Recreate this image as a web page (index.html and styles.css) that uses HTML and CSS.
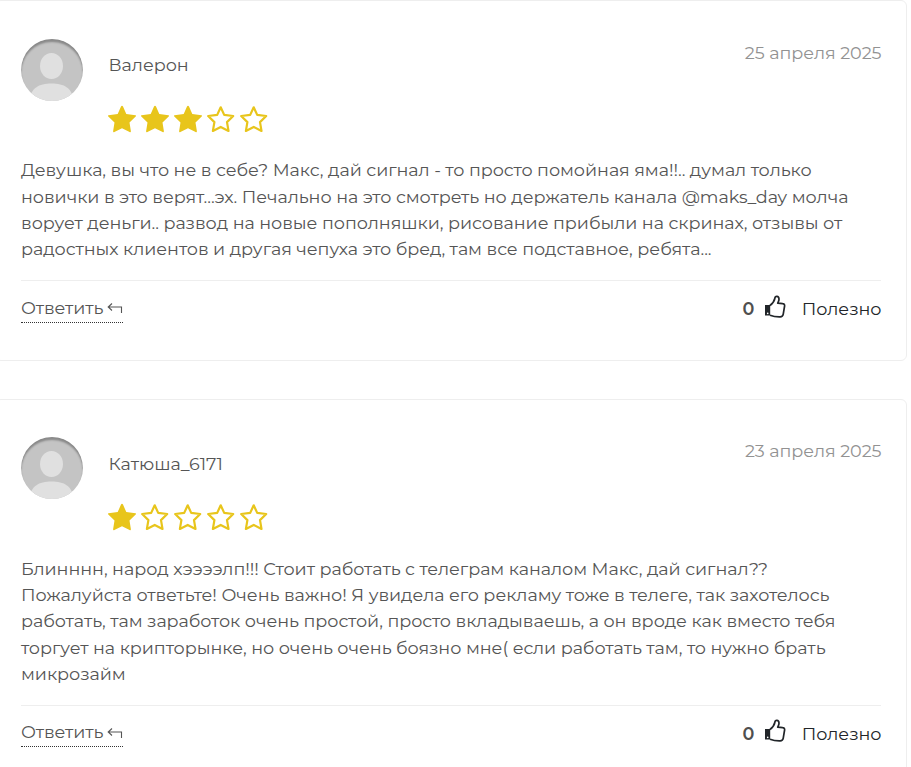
FILE: index.html
```html
<!DOCTYPE html>
<html lang="ru">
<head>
    <meta charset="UTF-8">
    <title>Отзывы</title>
    <link rel="stylesheet" href="styles.css">
</head>
<body>
    <svg class="sprite" xmlns="http://www.w3.org/2000/svg">
        <symbol id="star" viewBox="0 0 28 28">
            <path d="M14 .8Q14.600.800 15 1.600L18.300 9.100 27.500 10.200Q28.500 10.600 27.700 11.400L21.500 17.600 22.900 26.200Q22.900 27.600 21.600 27L14 23.300 6.400 27Q5.100 27.600 5.100 26.200L6.500 17.600.3 11.400Q-.5 10.600.5 10.200L9.700 9.100 13 1.600Q13.400.8 14 .8z"/>
        </symbol>
        <symbol id="star-empty" viewBox="0 0 28 28">
            <path d="M13.700 2.300L17.200 9.900 26.200 11 20 17.100 21.500 25.900 13.700 21.900 5.900 25.900 7.400 17.100 1.200 11 10.200 9.900z" fill="none" stroke="currentColor" stroke-width="2.200" stroke-linejoin="round"/>
        </symbol>
        <symbol id="avatar" viewBox="0 0 62 62">
            <rect width="62" height="62" fill="#c4c4c4"/>
            <ellipse cx="30.500" cy="27" rx="11.500" ry="13" fill="#e0e0e0"/>
            <path d="M9 62C9 49 18 44.500 30.500 44.500S52 49 52 62z" fill="#e0e0e0"/>
        </symbol>
        <symbol id="reply" viewBox="0 0 16 12">
            <path d="M5 1.500L1.200 5 5 8.500M1.200 5H14.500V11" fill="none" stroke="currentColor" stroke-width="1.100"/>
        </symbol>
        <symbol id="like" viewBox="0 0 22 23">
            <path d="M1 10h5.200v10.500H1z" fill="currentColor"/>
            <circle cx="3.700" cy="18.400" r=".8" fill="#fff"/>
            <path d="M6 10.500C8.500 8.500 10.300 6.500 10.800 3.500 11.200.600 14.800.8 15 4c.1 1.800-.8 3-1.300 4.200l5 .5c1.600.1 2.100 1 1.900 2.300l-1.400 8.400c-.3 1.600-1.400 2.400-3 2.400-4.300.1-7.100-.4-10.200-1.600" fill="none" stroke="currentColor" stroke-width="1.700" stroke-linejoin="round"/>
        </symbol>
    </svg>

    <div class="reviews">
        <div class="review">
            <div class="review-header">
                <div class="avatar"><svg><use href="#avatar"/></svg></div>
                <div class="author">
                    <div class="name">Валерон</div>
                    <div class="stars">
                        <svg><use href="#star"/></svg>
                        <svg><use href="#star"/></svg>
                        <svg><use href="#star"/></svg>
                        <svg><use href="#star-empty"/></svg>
                        <svg><use href="#star-empty"/></svg>
                    </div>
                </div>
                <div class="date">25 апреля 2025</div>
            </div>
            <div class="review-text">Девушка, вы что не в себе? Макс, дай сигнал - то просто помойная яма!!.. думал только новички в это верят...эх. Печально на это смотреть но держатель канала @maks_day молча ворует деньги.. развод на новые пополняшки, рисование прибыли на скринах, отзывы от радостных клиентов и другая чепуха это бред, там все подставное, ребята...</div>
            <div class="review-footer">
                <a class="reply">Ответить <svg><use href="#reply"/></svg></a>
                <div class="useful">
                    <b>0</b>
                    <svg><use href="#like"/></svg>
                    <span>Полезно</span>
                </div>
            </div>
        </div>

        <div class="review">
            <div class="review-header">
                <div class="avatar"><svg><use href="#avatar"/></svg></div>
                <div class="author">
                    <div class="name">Катюша_6171</div>
                    <div class="stars">
                        <svg><use href="#star"/></svg>
                        <svg><use href="#star-empty"/></svg>
                        <svg><use href="#star-empty"/></svg>
                        <svg><use href="#star-empty"/></svg>
                        <svg><use href="#star-empty"/></svg>
                    </div>
                </div>
                <div class="date">23 апреля 2025</div>
            </div>
            <div class="review-text">Блинннн, народ хээээлп!!! Стоит работать с телеграм каналом Макс, дай сигнал?? Пожалуйста ответьте! Очень важно! Я увидела его рекламу тоже в телеге, так захотелось работать, там заработок очень простой, просто вкладываешь, а он вроде как вместо тебя торгует на крипторынке, но очень очень боязно мне( если работать там, то нужно брать микрозайм</div>
            <div class="review-footer">
                <a class="reply">Ответить <svg><use href="#reply"/></svg></a>
                <div class="useful">
                    <b>0</b>
                    <svg><use href="#like"/></svg>
                    <span>Полезно</span>
                </div>
            </div>
        </div>
    </div>
</body>
</html>
```
FILE: styles.css
```css
html, body {
    height: 100%;
    overflow: hidden;
}
body {
    margin: 0;
    background-color: #fff;
    font-family: Montserrat, Inter, sans-serif;
    font-size: 17.6px;
    font-weight: 400;
    line-height: 26.4px;
    letter-spacing: -0.053px;
    color: #555;
}
.sprite {
    display: none;
}
.reviews {
    width: 912px;
    height: 100%;
    box-sizing: border-box;
    padding-top: 0.2px;
    margin-left: -5px;
    overflow: hidden;
}
.review {
    box-sizing: border-box;
    padding: 37.8px 25px 36.6px;
    margin-bottom: 38px;
    border: 1px solid #eee;
    border-radius: 6px;
}
.review-header {
    display: flex;
    height: 118.2px;
}
.avatar {
    position: relative;
    width: 62px;
    height: 62px;
    border-radius: 50%;
    overflow: hidden;
}
.avatar svg {
    display: block;
    width: 62px;
    height: 62px;
}
.avatar::after {
    content: "";
    position: absolute;
    inset: 0;
    border-radius: 50%;
    box-shadow: inset 0 3px 2px rgba(0,0,0,0.3);
}
.author {
    flex: 1;
    padding: 13.2px 0 0 25px;
}
.name {
    padding-left: 0.5px;
}
.stars {
    display: flex;
    gap: 5px;
    margin-top: 26.4px;
    color: #e8c51b;
}
.stars svg {
    width: 28px;
    height: 28px;
    fill: currentColor;
}
.date {
    padding-top: 1px;
    margin-right: -0.5px;
    color: #929292;
}
.review-text {
    padding-bottom: 17.2px;
    border-bottom: 1px solid #eee;
}
.review-footer {
    display: flex;
    justify-content: space-between;
    align-items: flex-start;
    padding-top: 13.6px;
    height: 28.4px;
}
.reply {
    display: flex;
    align-items: center;
    gap: 4px;
    padding-bottom: 0.6px;
    border-bottom: 1px dotted #333;
}
.reply svg {
    width: 16px;
    height: 12px;
}
.useful {
    display: flex;
    align-items: center;
    margin-right: -0.5px;
    color: #212529;
}
.useful b {
    font-weight: 600;
    color: #4f4f4f;
}
.useful svg {
    width: 22px;
    height: 23px;
    margin: 0 15.5px 6px 10px;
}
```
